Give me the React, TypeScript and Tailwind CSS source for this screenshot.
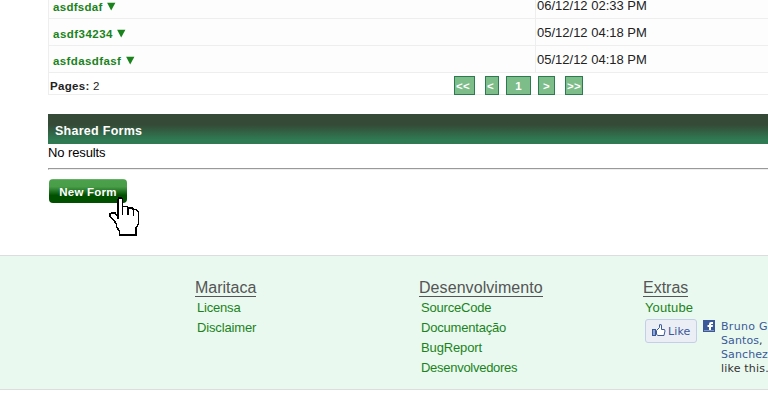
import React from "react";

const rows = [
  { name: "asdfsdaf", date: "06/12/12 02:33 PM", spacing: "tracking-[0.3px]" },
  { name: "asdf34234", date: "05/12/12 04:18 PM", spacing: "tracking-[0.48px]" },
  { name: "asfdasdfasf", date: "05/12/12 04:18 PM", spacing: "tracking-[0.4px]" },
];

const pages = [
  { label: "<<", box: "w-[21px] pr-[3px]" },
  { label: "<", box: "w-[14px] ml-[10px] pr-[3px]" },
  { label: "1", box: "w-[25px] ml-[7px]" },
  { label: ">", box: "w-[17px] ml-[7px]" },
  { label: ">>", box: "w-[18px] ml-[10px]" },
];

const columns = [
  {
    title: "Maritaca",
    style: "w-[61px]",
    links: [
      { label: "Licensa", spacing: "tracking-[-0.2px]" },
      { label: "Disclaimer", spacing: "tracking-[-0.15px]" },
    ],
  },
  {
    title: "Desenvolvimento",
    style: "w-[124px] tracking-[0.07px]",
    links: [
      { label: "SourceCode", spacing: "tracking-[-0.2px]" },
      { label: "Documentação", spacing: "tracking-[-0.2px]" },
      { label: "BugReport", spacing: "tracking-[-0.13px]" },
      { label: "Desenvolvedores", spacing: "tracking-[-0.28px]" },
    ],
  },
  {
    title: "Extras",
    style: "w-[45px]",
    links: [{ label: "Youtube", spacing: "tracking-[0.13px]" }],
  },
];

function FormsTable() {
  return (
    <div className="-mt-[8px] w-[760px] border-l border-b border-[#eeeeee]">
      {rows.map((row) => (
        <div key={row.name} className="flex h-[27px] border-b border-[#eeeeee] bg-[#fdfdfd]">
          <div className="flex w-[486px] items-center pl-1 pt-[4px] text-[11.5px] font-bold leading-none text-[#1b831b]">
            <span className={`${row.spacing} pt-[2px]`}>{row.name}</span>
            <svg className="-mt-[2px] ml-[4.5px]" width="9" height="9" viewBox="0 0 9 9">
              <path d="M0.1 0.7H8.4L4.2 8.6Z" fill="#1b831b" />
            </svg>
          </div>
          <div className="flex items-center border-l border-[#eeeeee] pl-px pt-px text-[13px] leading-[16px] text-[#222222]">
            {row.date}
          </div>
        </div>
      ))}
      <div className="flex h-[21px] pt-[3px]">
        <div className="w-[405px] pl-px pt-px text-[11.5px] leading-[18px] tracking-[0.3px] text-[#222222]">
          <b>Pages:</b> 2
        </div>
        {pages.map((p) => (
          <div
            key={p.label}
            className={`${p.box} flex h-[19px] shrink-0 items-center justify-center border border-[#2c7a50] bg-[#7dbd8a] pt-[2px] text-[11.5px] font-bold leading-none tracking-[0.3px] text-white`}
          >
            {p.label}
          </div>
        ))}
      </div>
    </div>
  );
}

function HandCursor() {
  return (
    <svg className="absolute left-[60px] top-[18px]" width="32" height="40" viewBox="0 0 32 40">
      <path
        d="M9 21.5V2.5L10 1H12.5L13.5 2.5V9.5H18L19.5 11H23L24.5 12.5H27L29.5 15V27L27 31V38H10.5V34L7.5 30V27L4.5 23L1 19V17L3 16H6L9 19.5Z"
        fill="white"
        stroke="black"
        strokeWidth="1.6"
        shapeRendering="crispEdges"
      />
      <path
        d="M13.5 9V18M19 11V18M24.5 13V19"
        fill="none"
        stroke="black"
        strokeWidth="1.5"
        shapeRendering="crispEdges"
      />
    </svg>
  );
}

function LikeBox() {
  return (
    <div className="flex font-['DejaVu_Sans',sans-serif] text-[11px]">
      <div className="ml-[2px] mt-px flex h-[24px] w-[52px] shrink-0 items-center rounded-[3px] border border-[#c5cee6] bg-[#eceef6] pl-[6px] text-[#3b5998]">
        <svg className="-mt-px" width="14" height="14" viewBox="0 0 14 14">
          <rect x="0.5" y="5.5" width="3" height="6" fill="#91a8d4" stroke="#3b5998" />
          <path
            d="M4.5 6.5L7.5 3.5V0.7H9.3L9.5 2V5.5H12.5L13 7L12.5 9L12 11.5H6L4.5 10.5Z"
            fill="white"
            stroke="#3b5998"
          />
        </svg>
        <span className="ml-[2px] pt-[2px] tracking-[0.1px]">Like</span>
      </div>
      <svg className="ml-[6px] mt-[2px] shrink-0" width="12" height="12" viewBox="0 0 12 12">
        <rect width="12" height="12" fill="#3b5998" />
        <path d="M6 10V7H4.5V5H6V4Q6 2 8 2H10V4H8.7Q8 4 8 5H10L9.7 7H8V10Z" fill="white" />
        <path d="M1 10.5H11" stroke="#8497be" />
      </svg>
      <div className="ml-[6px] mt-[2px] w-[47px] whitespace-nowrap leading-[14px] tracking-[0.1px] text-[#333333]">
        <div className="tracking-[0.3px] text-[#3b5998]">Bruno G</div>
        <div><span className="text-[#3b5998]">Santos</span>,</div>
        <div className="text-[#3b5998]">Sanchez</div>
        <div className="tracking-[0.2px]">like this.</div>
      </div>
    </div>
  );
}

export default function App() {
  return (
    <div className="h-[400px] w-[768px] overflow-hidden bg-white font-['Liberation_Sans',Arial,sans-serif]">
      <main className="flow-root h-[255px] overflow-hidden pl-[48px]">
        <FormsTable />
        <div className="mt-[19px] flex h-[30px] items-center bg-[linear-gradient(#354a37_0%,#354a37_36%,#2f7a52_85%,#2f7a52_100%)] pl-[7px] pt-[3px] text-[12.5px] font-bold leading-[18px] tracking-[0.27px] text-white">
          Shared Forms
        </div>
        <div className="h-[24px] text-[13px] leading-[18px] tracking-[-0.1px] text-black">No results</div>
        <hr className="h-[2px] border-t border-b border-l border-t-[#999999] border-b-[#eeeeee] border-l-[#999999]" />
        <div className="relative ml-px mt-[9px] w-[78px]">
          <button className="block h-[24px] w-[78px] rounded-[4px] bg-[linear-gradient(#75b875_0%,#4ba04b_6%,#499d49_32%,#005000_68%,#005000_100%)] pt-[4px] text-[11.5px] font-bold leading-none tracking-[0.25px] text-white">
            New Form
          </button>
          <HandCursor />
        </div>
      </main>
      <footer className="flex h-[135px] border-y border-[#dddddd] bg-[#e9f9ef] pl-[195px] pt-[22px]">
        {columns.map((col) => (
          <section key={col.title} className="w-[224px] shrink-0">
            <h2 className={`${col.style} h-[19px] whitespace-nowrap border-b border-[#555555] text-[16px] leading-[19px] text-[#555555]`}>
              {col.title}
            </h2>
            <ul className="pl-[2px] pt-px text-[13px] leading-[20px] text-[#1b831b]">
              {col.links.map((link) => (
                <li key={link.label} className={link.spacing}>{link.label}</li>
              ))}
            </ul>
            {col.title === "Extras" && <LikeBox />}
          </section>
        ))}
      </footer>
    </div>
  );
}
